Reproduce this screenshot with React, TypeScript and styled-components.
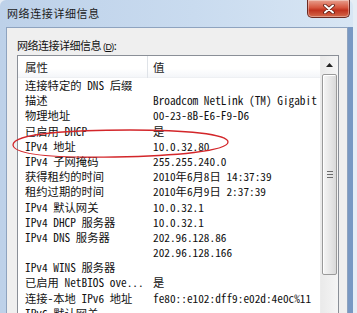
import styled, { createGlobalStyle } from "styled-components";

const GlobalStyle = createGlobalStyle`
  html, body {
    margin: 0;
    padding: 0;
  }
  body {
    width: 357px;
    height: 313px;
    overflow: hidden;
    background: #e6edf5;
    font-family: "Noto Sans CJK SC", "Liberation Sans", sans-serif;
  }
`;

const rows: [string, string][] = [
  ["连接特定的 DNS 后缀", ""],
  ["描述", "Broadcom NetLink (TM) Gigabit"],
  ["物理地址", "00-23-8B-E6-F9-D6"],
  ["已启用 DHCP", "是"],
  ["IPv4 地址", "10.0.32.80"],
  ["IPv4 子网掩码", "255.255.240.0"],
  ["获得租约的时间", "2010年6月8日 14:37:39"],
  ["租约过期的时间", "2010年6月9日 2:37:39"],
  ["IPv4 默认网关", "10.0.32.1"],
  ["IPv4 DHCP 服务器", "10.0.32.1"],
  ["IPv4 DNS 服务器", "202.96.128.86"],
  ["", "202.96.128.166"],
  ["IPv4 WINS 服务器", ""],
  ["已启用 NetBIOS ove...", "是"],
  ["连接-本地 IPv6 地址", "fe80::e102:dff9:e02d:4e0c%11"],
  ["IPv6 默认网关", ""],
];

const App = () => {
  return (
    <>
      <GlobalStyle />
      <Window>
        <TitleBar>
          <Title>网络连接详细信息</Title>
          <CloseButton>
            <svg width="14" height="10" viewBox="0 0 14 10">
              <path d="M3 1.5 L11 8.5 M11 1.5 L3 8.5" stroke="#5a1a12" strokeWidth="3.6" strokeLinecap="round" />
              <path d="M3 1.5 L11 8.5 M11 1.5 L3 8.5" stroke="#ffffff" strokeWidth="2" strokeLinecap="round" />
            </svg>
          </CloseButton>
        </TitleBar>
        <Frame>
          <Client>
            <Label>
              网络连接详细信息 <Key>(<u>D</u>)</Key>:
            </Label>
            <ListView>
              <Table>
                <Header>
                  <HeadCell $divider>属性</HeadCell>
                  <HeadCell>值</HeadCell>
                </Header>
                {rows.map(([name, value], i) => (
                  <Row key={i}>
                    <Cell>{name}</Cell>
                    <Cell $value>{value}</Cell>
                  </Row>
                ))}
              </Table>
              <ScrollBar>
                <ArrowButton>
                  <svg width="7" height="4" viewBox="0 0 7 4">
                    <path d="M0 4 L3.5 0 L7 4 Z" fill="#222" />
                  </svg>
                </ArrowButton>
                <Track>
                  <Thumb>
                    <Grip />
                  </Thumb>
                </Track>
                <ArrowButton>
                  <svg width="7" height="4" viewBox="0 0 7 4">
                    <path d="M0 0 L3.5 4 L7 0 Z" fill="#222" />
                  </svg>
                </ArrowButton>
              </ScrollBar>
            </ListView>
          </Client>
        </Frame>
        <Annotation width="240" height="40" viewBox="0 0 240 40">
          <path
            d="M8 21 C 8 9, 70 6, 125 6 C 180 6, 223 10, 223 18 C 223 27, 170 32, 110 33 C 50 34, 9 31, 8 21 Z"
            fill="none"
            stroke="#d3262a"
            strokeWidth="1.3"
          />
        </Annotation>
      </Window>
    </>
  );
};

export default App;

const Window = styled.div`
  position: relative;
  width: 353px;
  height: 330px;
  display: flex;
  flex-direction: column;
  border-radius: 6px 6px 0 0;
  background: linear-gradient(90deg, #bdd1e9 0%, #c9dbef 55%, #d8e6f4 100%);
`;

const TitleBar = styled.div`
  height: 27px;
  display: flex;
  align-items: flex-start;
  justify-content: space-between;
  padding: 0 3px 0 7px;
`;

const Title = styled.div`
  margin-top: 5px;
  font-size: 11px;
  line-height: 16px;
  letter-spacing: 0.6px;
  color: #1b1b1b;
`;

const CloseButton = styled.div`
  width: 43px;
  height: 18px;
  display: flex;
  align-items: center;
  justify-content: center;
  border: 1px solid #6b2a22;
  border-top: none;
  border-radius: 0 0 5px 5px;
  box-sizing: border-box;
  background: linear-gradient(180deg, #e8a08e 0%, #d6563f 45%, #c0321e 60%, #d46a4c 100%);
  box-shadow: inset 0 0 0 1px rgba(255, 255, 255, 0.35);
`;

const Frame = styled.div`
  flex: 1;
  display: flex;
  padding: 0 5px 0 6px;
  background: linear-gradient(90deg, transparent 0, transparent 343px, #8aa6cc 343px, #7898c3 347px);
`;

const Client = styled.div`
  flex: 1;
  display: flex;
  flex-direction: column;
  background: #efefef;
  border: 1px solid #8ea3bf;
  border-bottom: none;
  padding: 9px 8px 0 10px;
`;

const Label = styled.div`
  height: 17px;
  font-size: 11px;
  line-height: 17px;
  letter-spacing: -0.5px;
  color: #111;
`;

const Key = styled.span`
  font-family: "Liberation Sans", sans-serif;
  font-size: 9px;
  letter-spacing: -0.6px;
`;

const ListView = styled.div`
  margin-top: 1px;
  flex: 1;
  display: flex;
  background: #ffffff;
  border: 1px solid #8a8f97;
  border-bottom: none;
`;

const Table = styled.div`
  flex: 1;
  display: flex;
  flex-direction: column;
`;

const Header = styled.div`
  height: 22px;
  display: grid;
  grid-template-columns: 130px 1fr;
  background: linear-gradient(180deg, #ffffff 0%, #ffffff 60%, #f4f6f9 100%);
  border-bottom: 1px solid #eef0f3;
  box-sizing: border-box;
`;

const HeadCell = styled.div<{ $divider?: boolean }>`
  padding-left: ${({ $divider }) => ($divider ? "7px" : "5px")};
  font-size: 11.5px;
  line-height: 22px;
  color: #1a1a1a;
  border-right: ${({ $divider }) => ($divider ? "1px solid #dfe3e8" : "none")};
`;

const Row = styled.div`
  height: 15.2px;
  display: grid;
  grid-template-columns: 130px 1fr;
  font-family: "Noto Sans Mono CJK SC", "Liberation Mono", "Noto Sans CJK SC", monospace;
  font-size: 11.3px;
  line-height: 15.2px;
  color: #111;
  white-space: nowrap;
`;

const Cell = styled.div<{ $value?: boolean }>`
  padding-left: ${({ $value }) => ($value ? "5px" : "7px")};
  overflow: hidden;
`;

const ScrollBar = styled.div`
  width: 17px;
  display: flex;
  flex-direction: column;
  background: linear-gradient(90deg, #eaeaea, #f5f5f5);
  border-left: 1px solid #ececec;
`;

const ArrowButton = styled.div`
  height: 17px;
  display: flex;
  align-items: center;
  justify-content: center;
`;

const Track = styled.div`
  flex: 1;
  display: flex;
  flex-direction: column;
  padding: 1px 1px 27px 1px;
`;

const Thumb = styled.div`
  height: 199px;
  display: flex;
  align-items: center;
  justify-content: center;
  border: 1px solid #9a9a9a;
  border-radius: 2px;
  background: linear-gradient(90deg, #f6f6f6 0%, #e8e8e8 50%, #d9d9d9 100%);
  box-shadow: inset 1px 1px 0 #ffffff;
`;

const Grip = styled.div`
  width: 6px;
  height: 7px;
  background: repeating-linear-gradient(180deg, #6c6c6c 0 1px, transparent 1px 3px);
`;

const Annotation = styled.svg`
  position: absolute;
  left: 5px;
  top: 124px;
  pointer-events: none;
`;
